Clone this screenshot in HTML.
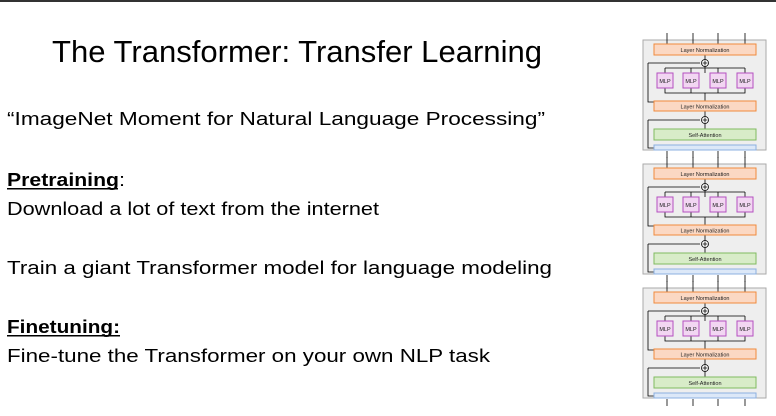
<!DOCTYPE html>
<html><head><meta charset="utf-8"><style>
html,body{margin:0;padding:0;background:#fff;width:776px;height:416px;overflow:hidden}
svg{display:block}
</style></head><body>
<svg width="776" height="416" xmlns="http://www.w3.org/2000/svg" font-family="Liberation Sans, sans-serif">
<rect x="0" y="0" width="776" height="2" fill="#333"/>
<text x="52" y="62" font-size="31" textLength="490" lengthAdjust="spacingAndGlyphs" fill="#000">The Transformer: Transfer Learning</text>
<g font-size="18.5" fill="#000">
<text x="7" y="125" textLength="538" lengthAdjust="spacingAndGlyphs">“ImageNet Moment for Natural Language Processing”</text>
<text x="7" y="186" font-weight="bold" textLength="112" lengthAdjust="spacingAndGlyphs">Pretraining</text>
<text x="119" y="186" textLength="6" lengthAdjust="spacingAndGlyphs">:</text>
<rect x="7" y="188" width="111" height="1.5"/>
<text x="7" y="215" textLength="372" lengthAdjust="spacingAndGlyphs">Download a lot of text from the internet</text>
<text x="7" y="274" textLength="545" lengthAdjust="spacingAndGlyphs">Train a giant Transformer model for language modeling</text>
<text x="7" y="333" font-weight="bold" textLength="113" lengthAdjust="spacingAndGlyphs">Finetuning:</text>
<rect x="7" y="335" width="113" height="1.5"/>
<text x="7" y="362" textLength="483" lengthAdjust="spacingAndGlyphs">Fine-tune the Transformer on your own NLP task</text>
</g>
<defs>
<g id="blk">
<rect x="643" y="40" width="123" height="110" fill="#eeeeee" stroke="#aaa" stroke-width="1"/>
<g stroke="#000" stroke-width="0.8" fill="none">
<path d="M667 33V44M693 33V44M718 33V44M745 33V44"/>
<path d="M667 151V158M693 151V158M718 151V158M745 151V158"/>
<path d="M705 55V73M648 63H700M648 63V102H705"/>
<path d="M665 68H745M665 68V73M691 68V73M718 68V73M745 68V73"/>
<path d="M665 88V93H745V88M691 88V93M718 88V93M705 93V101"/>
<path d="M705 111V129M648 120H700M648 120V148H654"/>
</g>
<rect x="654" y="44" width="102" height="11" fill="#fbd8c3" stroke="#f08a3c" stroke-width="1"/>
<text x="705" y="52" font-size="5.5" text-anchor="middle" fill="#222">Layer Normalization</text>
<circle cx="705" cy="63" r="3.5" fill="#fff" stroke="#000" stroke-width="0.8"/>
<path d="M702.5 63H707.5M705 60.5V65.5" stroke="#000" stroke-width="0.8"/>
<g fill="#f2d6f2" stroke="#b450c0" stroke-width="1">
<rect x="657" y="73" width="16" height="15"/><rect x="683" y="73" width="16" height="15"/>
<rect x="710" y="73" width="16" height="15"/><rect x="737" y="73" width="16" height="15"/>
</g>
<g font-size="5.5" text-anchor="middle" fill="#222">
<text x="665" y="83">MLP</text><text x="691" y="83">MLP</text><text x="718" y="83">MLP</text><text x="745" y="83">MLP</text>
</g>
<rect x="654" y="101" width="102" height="10" fill="#fbd8c3" stroke="#f08a3c" stroke-width="1"/>
<text x="705" y="108.5" font-size="5.5" text-anchor="middle" fill="#222">Layer Normalization</text>
<circle cx="705" cy="120" r="3.5" fill="#fff" stroke="#000" stroke-width="0.8"/>
<path d="M702.5 120H707.5M705 117.5V122.5" stroke="#000" stroke-width="0.8"/>
<rect x="654" y="129" width="102" height="11" fill="#d8ecc8" stroke="#80bb60" stroke-width="1"/>
<text x="705" y="137" font-size="5.5" text-anchor="middle" fill="#222">Self-Attention</text>
<rect x="654" y="145" width="102" height="5" fill="#dce8f8" stroke="#8cb0e0" stroke-width="1"/>
</g>
</defs>
<use href="#blk"/>
<use href="#blk" y="124"/>
<use href="#blk" y="248"/>
</svg>
</body></html>
